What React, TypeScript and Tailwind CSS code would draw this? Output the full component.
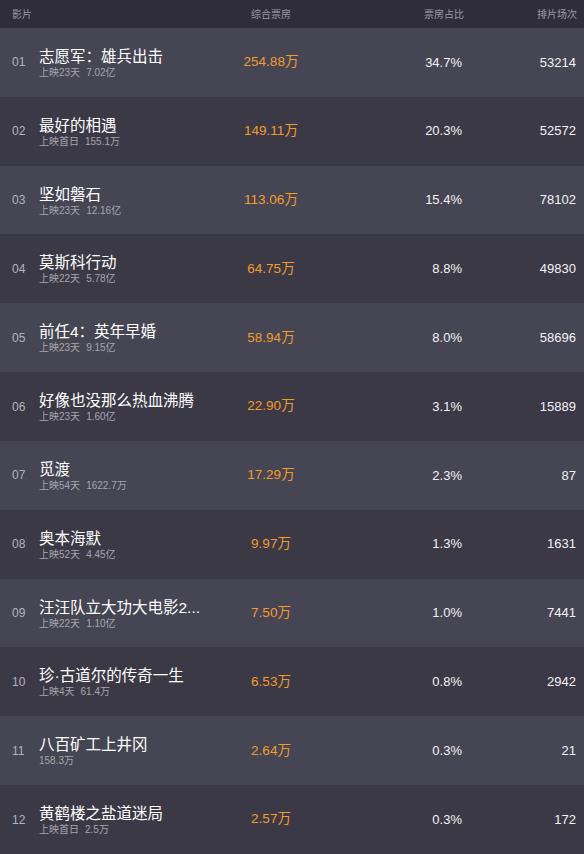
import React from 'react';

interface Movie {
  name: string;
  info: string[];
  boxOffice: string;
  rate: string;
  shows: string;
}

const movies: Movie[] = [
  { name: '志愿军：雄兵出击', info: ['上映23天', '7.02亿'], boxOffice: '254.88万', rate: '34.7%', shows: '53214' },
  { name: '最好的相遇', info: ['上映首日', '155.1万'], boxOffice: '149.11万', rate: '20.3%', shows: '52572' },
  { name: '坚如磐石', info: ['上映23天', '12.16亿'], boxOffice: '113.06万', rate: '15.4%', shows: '78102' },
  { name: '莫斯科行动', info: ['上映22天', '5.78亿'], boxOffice: '64.75万', rate: '8.8%', shows: '49830' },
  { name: '前任4：英年早婚', info: ['上映23天', '9.15亿'], boxOffice: '58.94万', rate: '8.0%', shows: '58696' },
  { name: '好像也没那么热血沸腾', info: ['上映23天', '1.60亿'], boxOffice: '22.90万', rate: '3.1%', shows: '15889' },
  { name: '觅渡', info: ['上映54天', '1622.7万'], boxOffice: '17.29万', rate: '2.3%', shows: '87' },
  { name: '奥本海默', info: ['上映52天', '4.45亿'], boxOffice: '9.97万', rate: '1.3%', shows: '1631' },
  { name: '汪汪队立大功大电影2...', info: ['上映22天', '1.10亿'], boxOffice: '7.50万', rate: '1.0%', shows: '7441' },
  { name: '珍·古道尔的传奇一生', info: ['上映4天', '61.4万'], boxOffice: '6.53万', rate: '0.8%', shows: '2942' },
  { name: '八百矿工上井冈', info: ['158.3万'], boxOffice: '2.64万', rate: '0.3%', shows: '21' },
  { name: '黄鹤楼之盐道迷局', info: ['上映首日', '2.5万'], boxOffice: '2.57万', rate: '0.3%', shows: '172' },
];

const font = { fontFamily: '"Liberation Sans", "Noto Sans CJK SC", sans-serif' };

export default function App() {
  return (
    <div className="w-[584px] h-[854px] bg-[#3b3946] overflow-hidden" style={font}>
      {/* header */}
      <div className="flex items-center h-[28px] bg-[#2f2d3a] text-[10px] text-[#9b9aa5]">
        <div className="pl-3 w-[210px]">影片</div>
        <div className="w-[122px] text-center">综合票房</div>
        <div className="w-[132px] text-right">票房占比</div>
        <div className="w-[113px] text-right">排片场次</div>
      </div>

      {movies.map((m, i) => (
        <div
          key={m.name}
          className={`flex items-center h-[68.83px] ${i % 2 === 0 ? 'bg-[#464553]' : 'bg-[#3b3946]'}`}
        >
          <div className="pl-3 w-[39px] text-[12px] text-[#b4b3bc]">
            {String(i + 1).padStart(2, '0')}
          </div>
          <div className="w-[171px] flex flex-col pt-[2px]">
            <span className="text-[15.5px] leading-[18px] text-white whitespace-nowrap">{m.name}</span>
            <span className="text-[10px] leading-[13px] text-[#a6a5ae] whitespace-nowrap">
              {m.info.map((t, j) => (
                <span key={t} className={j > 0 ? 'ml-[6px]' : ''}>{t}</span>
              ))}
            </span>
          </div>
          <div className="w-[122px] text-center text-[13.5px] text-[#f39b2d]">{m.boxOffice}</div>
          <div className="w-[130px] text-right text-[13px] text-[#f2f2f5]">{m.rate}</div>
          <div className="w-[114px] text-right text-[13px] text-[#f2f2f5]">{m.shows}</div>
        </div>
      ))}
    </div>
  );
}
